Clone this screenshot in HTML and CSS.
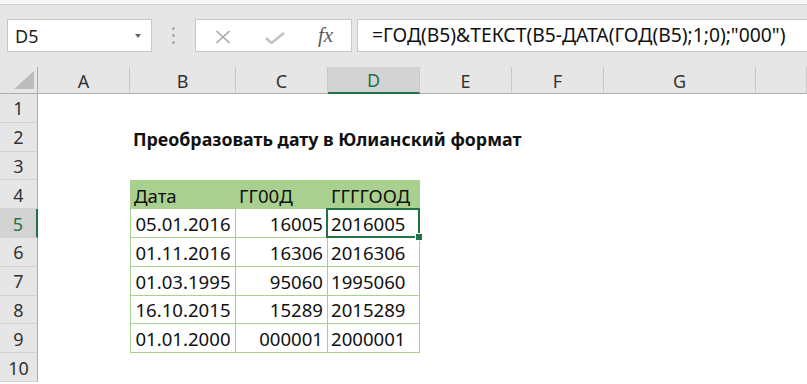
FILE: index.html
```html
<!DOCTYPE html>
<html lang="ru">
  <head>
    <meta charset="UTF-8" />
    <title>Юлианский формат</title>
    <link rel="stylesheet" href="styles.css">
  </head>
  <body>
    <div class="topstrip"></div>
    <div class="toolbar">
      <div class="namebox"><span>D5</span><span class="caret"></span></div>
      <div class="grip"><i></i><i></i><i></i></div>
      <div class="fxbox">
        <svg class="ico-x" width="16" height="14" viewBox="0 0 16 14">
          <path d="M1.5 1 L14.5 13 M14.5 1 L1.5 13" stroke="#a6a6a6" stroke-width="1.6" fill="none" />
        </svg>
        <svg class="ico-ok" width="20" height="12" viewBox="0 0 20 12">
          <path d="M1 6 L6.5 11 L19 1" stroke="#c4c4c4" stroke-width="2.6" fill="none" />
        </svg>
        <span class="fx">fx</span>
      </div>
      <div class="formula">=ГОД(B5)&amp;ТЕКСТ(B5-ДАТА(ГОД(B5);1;0);"000")</div>
    </div>
    <table class="sheet">
      <colgroup>
        <col class="w-rh" />
        <col class="w-a" />
        <col class="w-b" />
        <col class="w-a" />
        <col class="w-a" />
        <col class="w-a" />
        <col class="w-a" />
        <col class="w-g" />
        <col />
      </colgroup>
      <thead>
        <tr>
          <th class="corner"><span class="tri"></span></th>
          <th>A</th>
          <th>B</th>
          <th>C</th>
          <th class="active">D</th>
          <th>E</th>
          <th>F</th>
          <th>G</th>
          <th></th>
        </tr>
      </thead>
      <tbody>
        <tr><th>1</th><td></td><td></td><td></td><td></td><td></td><td></td><td></td><td></td></tr>
        <tr><th>2</th><td></td><td class="title" colspan="4">Преобразовать дату в Юлианский формат</td><td></td><td></td><td></td></tr>
        <tr><th>3</th><td></td><td></td><td></td><td></td><td></td><td></td><td></td><td></td></tr>
        <tr class="hd">
          <th>4</th><td></td>
          <td class="t first">Дата</td><td class="t">ГГ00Д</td><td class="t">ГГГГООД</td>
          <td></td><td></td><td></td><td></td>
        </tr>
        <tr>
          <th class="active">5</th><td></td>
          <td class="t first c">05.01.2016</td><td class="t r">16005</td><td class="t sel">2016005</td>
          <td></td><td></td><td></td><td></td>
        </tr>
        <tr>
          <th>6</th><td></td>
          <td class="t first c">01.11.2016</td><td class="t r">16306</td><td class="t">2016306</td>
          <td></td><td></td><td></td><td></td>
        </tr>
        <tr>
          <th>7</th><td></td>
          <td class="t first c">01.03.1995</td><td class="t r">95060</td><td class="t">1995060</td>
          <td></td><td></td><td></td><td></td>
        </tr>
        <tr>
          <th>8</th><td></td>
          <td class="t first c">16.10.2015</td><td class="t r">15289</td><td class="t">2015289</td>
          <td></td><td></td><td></td><td></td>
        </tr>
        <tr>
          <th>9</th><td></td>
          <td class="t first c">01.01.2000</td><td class="t r">000001</td><td class="t">2000001</td>
          <td></td><td></td><td></td><td></td>
        </tr>
        <tr><th>10</th><td></td><td></td><td></td><td></td><td></td><td></td><td></td><td></td></tr>
      </tbody>
    </table>
  </body>
</html>
```

FILE: styles.css
```css
* {
  margin: 0;
  padding: 0;
  box-sizing: border-box;
}

body {
  width: 807px;
  height: 384px;
  overflow: hidden;
  background: #fff;
  font-family: "Noto Sans", "Open Sans", sans-serif;
  color: #111;
}

.topstrip {
  height: 5px;
  background: #f6f6f6;
  border-bottom: 1px solid #d4d4d4;
}

.toolbar {
  height: 62px;
  background: #e6e6e6;
  display: flex;
  align-items: flex-start;
  padding: 14px 0 0 7px;
}

.namebox {
  width: 145px;
  height: 33px;
  background: #fff;
  border: 1px solid #c6c6c6;
  display: flex;
  align-items: center;
  justify-content: space-between;
  padding: 0 10px 0 7px;
  font-size: 18px;
  color: #222;
}

.caret {
  width: 0;
  height: 0;
  border-left: 3.5px solid transparent;
  border-right: 3.5px solid transparent;
  border-top: 4px solid #666;
}

.grip {
  width: 43px;
  height: 33px;
  display: flex;
  flex-direction: column;
  align-items: center;
  justify-content: center;
  gap: 4px;
}

.grip i {
  width: 3px;
  height: 3px;
  border-radius: 50%;
  background: #a8a8a8;
}

.fxbox {
  width: 157px;
  height: 33px;
  background: #fff;
  border: 1px solid #c6c6c6;
  display: flex;
  align-items: center;
  padding-left: 19px;
}

.ico-x {
  margin-top: 2px;
}

.ico-ok {
  margin-left: 34px;
  margin-top: 5px;
}

.fx {
  margin-left: 33px;
  font-family: "Liberation Serif", "DejaVu Serif", serif;
  font-style: italic;
  font-size: 21px;
  color: #5c5c5c;
}

.formula {
  flex: 1;
  height: 33px;
  margin-left: 5px;
  background: #fff;
  border: 1px solid #c6c6c6;
  border-right: none;
  padding-left: 14px;
  font-size: 19.3px;
  line-height: 30px;
  color: #111;
  white-space: nowrap;
}

/* sheet grid */
.sheet {
  table-layout: fixed;
  border-collapse: separate;
  border-spacing: 0;
  width: 807px;
}

.w-rh { width: 38px; }
.w-a { width: 92px; }
.w-b { width: 106px; }
.w-g { width: 152px; }

.sheet thead th {
  height: 27px;
  background: #e6e6e6;
  border-right: 1px solid #c8c8c8;
  border-bottom: 1px solid #ababab;
  font-weight: normal;
  font-size: 18px;
  color: #333;
  text-align: center;
  vertical-align: middle;
  padding-top: 1px;
}

.sheet thead th.active {
  background: #d3d3d3;
  color: #217346;
  border-bottom: 2px solid #217346;
}

.sheet thead th.corner {
  border-right: 1px solid #ababab;
  text-align: right;
  vertical-align: bottom;
  padding: 0 3px 4px 0;
  line-height: 0;
}

.tri {
  display: inline-block;
  width: 0;
  height: 0;
  border-left: 20px solid transparent;
  border-bottom: 18px solid #bcbcbc;
}

.sheet tbody tr {
  height: 28.8px;
}

.sheet tbody th {
  background: #e6e6e6;
  border-right: 1px solid #ababab;
  border-bottom: 1px solid #d2d2d2;
  font-weight: normal;
  font-size: 18px;
  color: #333;
  text-align: center;
  padding-top: 1px;
}

.sheet tbody th.active {
  background: #d3d3d3;
  color: #217346;
  border-right: 2px solid #217346;
}

.sheet td {
  font-size: 18.6px;
  white-space: nowrap;
  overflow: visible;
  padding: 1px 4px 0 3px;
  color: #111;
}

.sheet td.title {
  font-weight: bold;
  font-size: 17.8px;
  padding-top: 3px;
}

.sheet td.t {
  border-right: 1px solid #a9d08e;
  border-bottom: 1px solid #a9d08e;
}

.sheet td.first {
  border-left: 1px solid #a9d08e;
}

.sheet tr.hd td.t {
  background: #a9d08e;
  border-top: 1px solid #a9d08e;
}

.sheet td.c { text-align: center; padding-left: 4px; }
.sheet td.r { text-align: right; }

.sheet td.sel {
  position: relative;
}

.sheet td.sel::after {
  content: "";
  position: absolute;
  left: -2px;
  top: -1px;
  right: -1px;
  bottom: -1px;
  border: 2px solid #217346;
}

.sheet td.sel::before {
  content: "";
  position: absolute;
  right: -4px;
  bottom: -4px;
  width: 6px;
  height: 6px;
  background: #217346;
  border: 1px solid #fff;
  z-index: 1;
}
```
